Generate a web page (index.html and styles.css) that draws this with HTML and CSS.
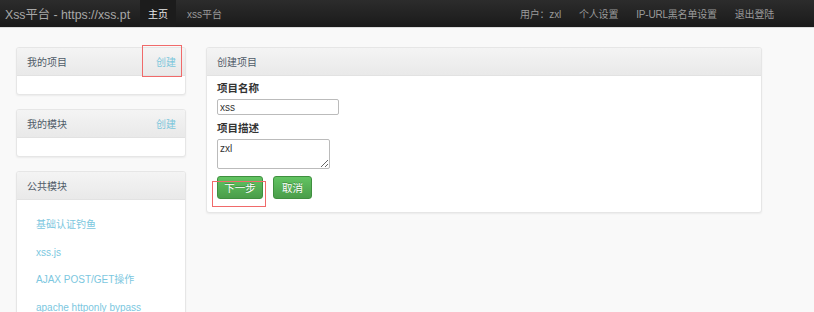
FILE: index.html
```html
<!DOCTYPE html>
<html lang="zh-CN">
  <head>
    <meta charset="UTF-8" />
    <meta name="viewport" content="width=device-width, initial-scale=1.0" />
    <title>Xss平台 - 创建项目</title>
    <link rel="stylesheet" href="styles.css">
  </head>
  <body>
    <div class="navbar">
      <a class="brand" href="#">Xss平台 - https://xss.pt</a>
      <a class="nav-item active" href="#">主页</a>
      <a class="nav-item" href="#">xss平台</a>
      <div class="nav-right">
        <span class="nav-item">用户：zxl</span>
        <a class="nav-item" href="#">个人设置</a>
        <a class="nav-item" href="#">IP-URL黑名单设置</a>
        <a class="nav-item" href="#">退出登陆</a>
      </div>
    </div>

    <div class="page">
      <div class="sidebar">
        <div class="panel">
          <div class="panel-head">
            <span>我的项目</span>
            <a class="link" href="#">创建</a>
          </div>
          <div class="panel-body"></div>
        </div>

        <div class="panel">
          <div class="panel-head">
            <span>我的模块</span>
            <a class="link" href="#">创建</a>
          </div>
          <div class="panel-body"></div>
        </div>

        <div class="panel">
          <div class="panel-head">
            <span>公共模块</span>
          </div>
          <ul class="module-list">
            <li><a href="#">基础认证钓鱼</a></li>
            <li><a href="#">xss.js</a></li>
            <li><a href="#">AJAX POST/GET操作</a></li>
            <li><a href="#">apache httponly bypass</a></li>
          </ul>
        </div>
      </div>

      <div class="main">
        <div class="panel">
          <div class="panel-head">
            <span>创建项目</span>
          </div>
          <div class="form-body">
            <label for="title">项目名称</label>
            <input type="text" id="title" value="xss" />
            <label for="description">项目描述</label>
            <textarea id="description">zxl</textarea>
            <div class="actions">
              <button class="btn next">下一步</button>
              <button class="btn">取消</button>
            </div>
          </div>
        </div>
      </div>
    </div>

    <!-- red annotation boxes from the screenshot -->
    <div class="mark mark-create"></div>
    <div class="mark mark-next"></div>
  </body>
</html>
```

FILE: styles.css
```css
body {
  margin: 0;
  background-color: #f9f9f9;
  font-family: "Liberation Sans", Arial, "Noto Sans CJK SC", sans-serif;
  font-size: 10px;
  color: #555;
}
a {
  text-decoration: none;
}
.navbar {
  display: flex;
  align-items: stretch;
  height: 27px;
  padding-left: 5px;
  padding-right: 31px;
  background: linear-gradient(#2c2c2c, #1a1a1a);
  border-bottom: 1px solid #dcdcdc;
}
.brand {
  display: flex;
  align-items: center;
  font-size: 12.3px;
  color: #a8a8a8;
  margin-right: 10px;
}
.nav-item {
  display: flex;
  align-items: center;
  padding: 0 10px;
  font-size: 10px;
  color: #9a9a9a;
}
.nav-item.active {
  padding: 0 8px;
  color: #e8e8e8;
  background-color: #1c1c1c;
  margin-right: 1px;
}
.nav-right {
  display: flex;
  margin-left: auto;
}
.nav-right .nav-item {
  padding: 0 9px;
  letter-spacing: -0.2px;
}
.page {
  display: flex;
  align-items: flex-start;
  gap: 20px;
  padding: 19px 0 0 16px;
}
.sidebar {
  display: flex;
  flex-direction: column;
  gap: 14px;
  width: 170px;
}
.main {
  width: 556px;
}
.panel {
  background: white;
  border: 1px solid #e6e6e6;
  border-radius: 3px;
  box-shadow: 0 1px 2px rgba(0, 0, 0, 0.06);
  overflow: hidden;
}
.panel-head {
  display: flex;
  justify-content: space-between;
  align-items: center;
  height: 27px;
  padding: 0 9px 0 10px;
  background: linear-gradient(#f4f4f4, #e9e9e9);
  border-bottom: 1px solid #e2e2e2;
  color: #4f5b68;
}
.link {
  color: #7cc7dc;
}
.panel-body {
  height: 18px;
}
.module-list {
  list-style: none;
  margin: 0;
  padding: 11px 0 0 19px;
}
.module-list li {
  height: 27.7px;
  line-height: 28px;
}
.module-list a {
  color: #7cc7e0;
}
.form-body {
  padding: 5px 10px 13px 10px;
}
label {
  display: block;
  line-height: 14px;
  font-weight: bold;
  font-size: 10.5px;
  color: #333;
  margin-bottom: 4px;
}
input,
textarea {
  display: block;
  box-sizing: border-box;
  margin: 0 0 6px 0;
  padding: 1px 2px;
  border: 1px solid #bbb;
  border-radius: 2px;
  font-family: "Liberation Sans", Arial, sans-serif;
  font-size: 10px;
  color: #333;
  background: white;
}
input {
  width: 122px;
  height: 16px;
}
textarea {
  width: 113px;
  height: 30px;
  padding-top: 3px;
  resize: vertical;
  margin-bottom: 7px;
}
.actions {
  display: flex;
  gap: 10px;
}
.btn {
  height: 23px;
  padding: 0 8px;
  border: 1px solid #3f8f3f;
  border-radius: 3px;
  background: linear-gradient(#62c462, #4a9d4a);
  color: white;
  font-size: 10.5px;
  font-family: "Liberation Sans", Arial, "Noto Sans CJK SC", sans-serif;
  text-shadow: 0 -1px 0 rgba(0, 0, 0, 0.25);
  white-space: nowrap;
  cursor: pointer;
}
.btn.next {
  width: 46px;
  padding: 0;
}
.mark {
  position: absolute;
  border: 1px solid #f06a6a;
}
.mark-create {
  left: 142px;
  top: 45px;
  width: 38px;
  height: 30px;
}
.mark-next {
  left: 212px;
  top: 181px;
  width: 52px;
  height: 24px;
}
```
